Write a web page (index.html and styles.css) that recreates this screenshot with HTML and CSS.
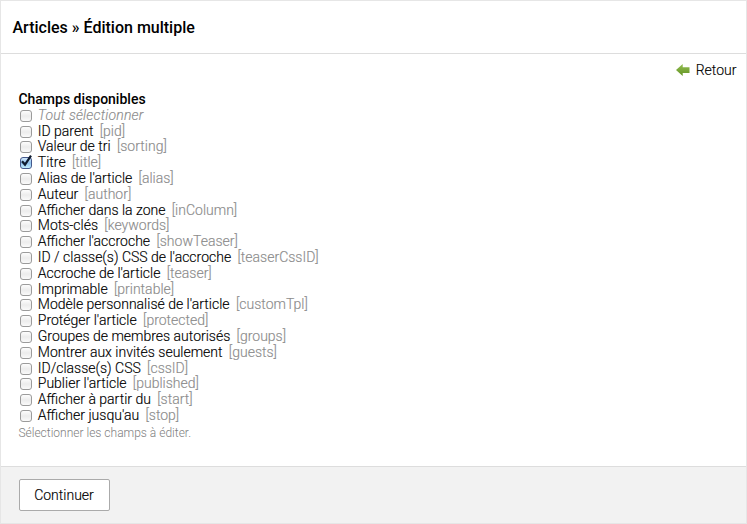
FILE: index.html
```
<!DOCTYPE html>
<html lang="fr">
<head>
<meta charset="utf-8">
<title>Articles » Édition multiple</title>
<link rel="stylesheet" href="styles.css">
</head>
<body>
<main class="panel">
  <h1 class="headline">Articles » Édition multiple</h1>
  <div class="content">
    <a class="back" href="#"><svg class="arrow" viewBox="0 0 14 12" width="14" height="12"><defs><linearGradient id="g" x1="0" y1="0" x2="0" y2="1"><stop offset="0" stop-color="#94bd52"/><stop offset="1" stop-color="#619322"/></linearGradient></defs><path d="M0 6 6.7 0V3.2H13.5V9H6.7V12Z" fill="url(#g)"/></svg>Retour</a>
    <fieldset class="fields">
      <legend>Champs disponibles</legend>
      <label class="all"><input type="checkbox"><em>Tout sélectionner</em></label>
      <label><input type="checkbox">ID parent <span>[pid]</span></label>
      <label><input type="checkbox">Valeur de tri <span>[sorting]</span></label>
      <label><input type="checkbox" checked><svg class="tick" viewBox="0 0 14 14" width="14" height="14"><path d="M3 7.2 6 10.6 12 1.6" fill="none" stroke="#101c30" stroke-width="2.2"/></svg>Titre <span>[title]</span></label>
      <label><input type="checkbox">Alias de l'article <span>[alias]</span></label>
      <label><input type="checkbox">Auteur <span>[author]</span></label>
      <label><input type="checkbox">Afficher dans la zone <span>[inColumn]</span></label>
      <label><input type="checkbox">Mots-clés <span>[keywords]</span></label>
      <label><input type="checkbox">Afficher l'accroche <span>[showTeaser]</span></label>
      <label><input type="checkbox">ID / classe(s) CSS de l'accroche <span>[teaserCssID]</span></label>
      <label><input type="checkbox">Accroche de l'article <span>[teaser]</span></label>
      <label><input type="checkbox">Imprimable <span>[printable]</span></label>
      <label><input type="checkbox">Modèle personnalisé de l'article <span>[customTpl]</span></label>
      <label><input type="checkbox">Protéger l'article <span>[protected]</span></label>
      <label><input type="checkbox">Groupes de membres autorisés <span>[groups]</span></label>
      <label><input type="checkbox">Montrer aux invités seulement <span>[guests]</span></label>
      <label><input type="checkbox">ID/classe(s) CSS <span>[cssID]</span></label>
      <label><input type="checkbox">Publier l'article <span>[published]</span></label>
      <label><input type="checkbox">Afficher à partir du <span>[start]</span></label>
      <label><input type="checkbox">Afficher jusqu'au <span>[stop]</span></label>
      <p class="help">Sélectionner les champs à éditer.</p>
    </fieldset>
  </div>
  <footer class="submit"><button type="button">Continuer</button></footer>
</main>
</body>
</html>
```
FILE: styles.css
```
* { box-sizing: border-box; }
body {
  margin: 0;
  font: 300 14px/16px Roboto, "Liberation Sans", sans-serif;
  color: #000;
  background: #fff;
}
.panel {
  display: flex;
  flex-direction: column;
  height: 524px;
  border: 1px solid #e6e6e6;
}
.headline {
  margin: 0;
  height: 53px;
  padding: 0 11.5px;
  border-bottom: 1px solid #ddd;
  font-size: 16px;
  font-weight: 500;
  line-height: 53px;
}
.content { flex: 1; padding: 8px 9px 0 17.4px; }
.back {
  display: flex;
  align-items: center;
  justify-content: flex-end;
  gap: 5.4px;
  height: 16px;
  padding-right: 0.6px;
  color: #000;
  text-decoration: none;
}
.back, label, button { -webkit-text-stroke: 0.15px currentColor; }
.fields { margin: 13px 0 0; padding: 0; border: 0; }
legend { padding: 0; font-weight: 500; height: 16.8px; }
label {
  position: relative;
  display: flex;
  align-items: center;
  height: 15.8px;
  line-height: 15.8px;
  white-space: pre;
}
label span, .all { color: #8c8c8c; }
label span { margin-left: 2.9px; }
.all em { letter-spacing: 0.17px; }
input {
  appearance: none;
  flex: none;
  width: 12px;
  height: 12px;
  margin: 0.4px 5.8px 0 1.6px;
  border: 1px solid #9b9b9b;
  border-radius: 3px;
  background: linear-gradient(#fdfdfd, #ececec 50%, #fafafa);
}
input:checked {
  border-color: #45598c;
  background: linear-gradient(#d4e9fb, #8fc2f0 50%, #c4efff);
}
.tick { position: absolute; left: 1px; top: -0.8px; }
.help { margin: 1.2px 0 0; font-size: 12px; line-height: 16px; color: #808080; }
.submit {
  height: 57px;
  padding: 12px 18px;
  border-top: 1px solid #ddd;
  background: #f2f2f2;
}
button {
  display: block;
  width: 91px;
  height: 32px;
  padding: 0 1px 0 0;
  border: 1px solid #aaa;
  border-radius: 2px;
  background: #fff;
  color: #000;
  font: inherit;
}
```
